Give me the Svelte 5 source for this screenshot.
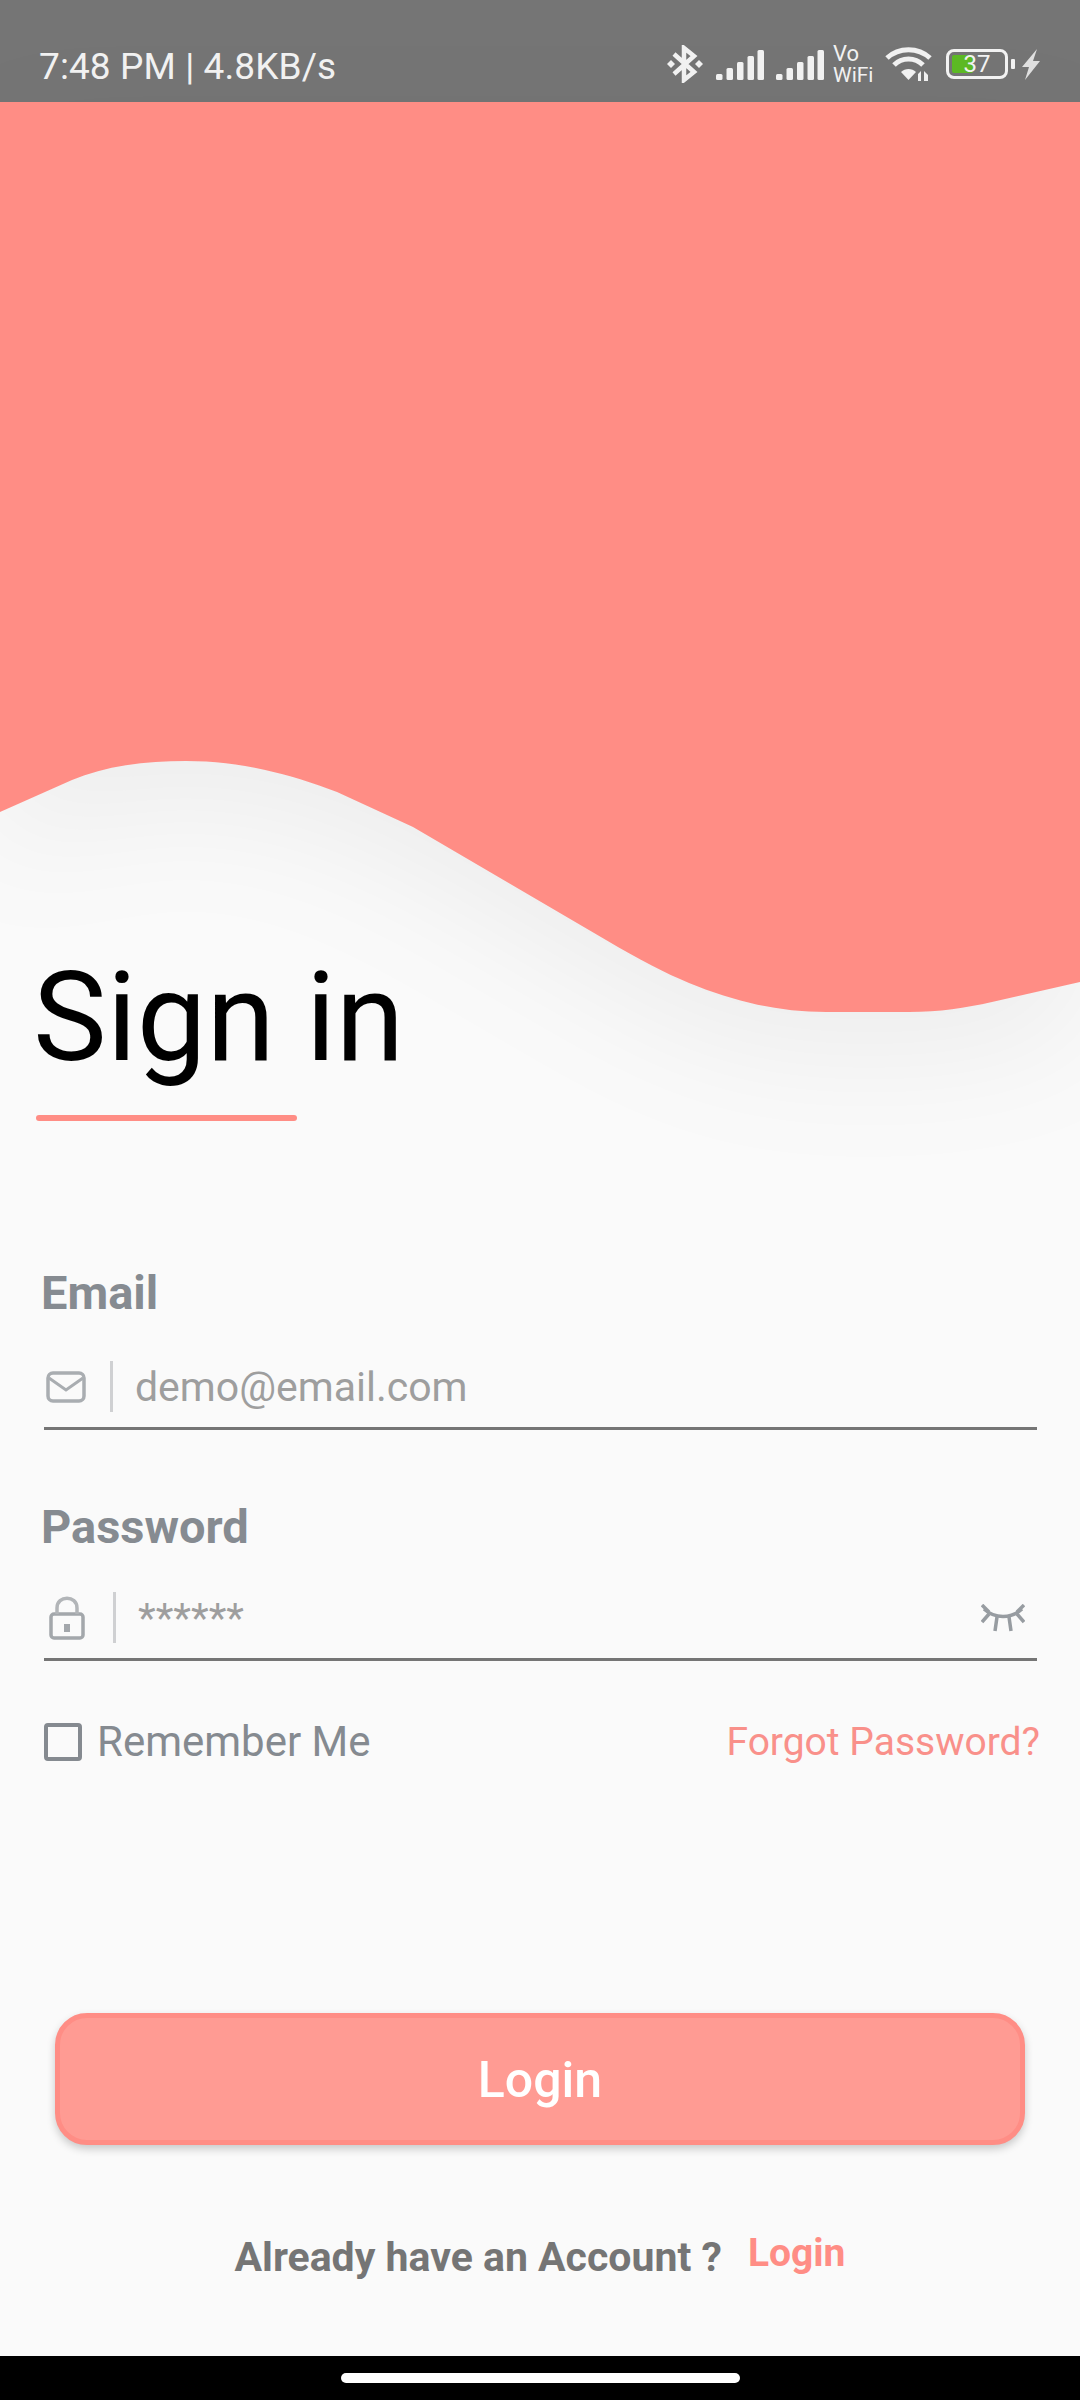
<script>
    const signals = [0, 1];
    const bars = [
        { x: 0, h: 6 },
        { x: 10.5, h: 12 },
        { x: 21, h: 18 },
        { x: 31.5, h: 24 },
        { x: 41.5, h: 30 }
    ];
</script>

<div class="screen">
    <header class="status">
        <span class="clock">7:48 PM | 4.8KB/s</span>
        <div class="status-icons">
            <svg class="bt" width="36" height="38" viewBox="0 0 36 38">
                <path d="M7 9 L27 27 L17 35 V3 L27 11 L7 29" fill="none" stroke="#f2f2f2" stroke-width="4.5"/>
                <path d="M4 15 L8 19 L4 23 L0 19 Z M32 15 L36 19 L32 23 L28 19 Z" fill="#f2f2f2"/>
            </svg>
            {#each signals as s}
                <svg class="signal" width="48" height="30" viewBox="0 0 48 30">
                    {#each bars as b}
                        <rect x={b.x} y={30 - b.h} width="6.5" height={b.h} rx="1.5" fill="#f2f2f2"/>
                    {/each}
                </svg>
            {/each}
            <div class="vowifi"><span>Vo</span><span>WiFi</span></div>
            <svg class="wifi" width="47" height="35" viewBox="0 0 47 35">
                <path d="M2 11 C14 0 33 0 45 11" fill="none" stroke="#f2f2f2" stroke-width="5"/>
                <path d="M9 18 C17 10 30 10 38 18" fill="none" stroke="#f2f2f2" stroke-width="5"/>
                <path d="M16 25 C20 21 27 21 31 25 L23.5 33 Z" fill="#f2f2f2"/>
                <path d="M33 34 V27 L36 24 V34 Z M39 34 V24 L43 28 V34 Z" fill="#f2f2f2"/>
            </svg>
            <div class="battery">
                <div class="level"></div>
                <span>37</span>
            </div>
            <div class="battery-tip"></div>
            <svg class="bolt" width="18" height="31" viewBox="0 0 18 31">
                <path d="M15 0 L0 18 L7 18 L3 31 L18 12 L11 12 Z" fill="#e0e0e0"/>
            </svg>
        </div>
    </header>

    <div class="hero">
        <svg width="1080" height="912" viewBox="0 0 1080 912">
            <path class="wave" d="M0 710 L72 678 C105 664 145 659 186 659 C240 659 290 672 337 690 L413 725 L606 838 C640 858 665 871 689 881 C735 900 780 910 826 910 L909 910 C940 910 965 906 992 900 L1080 880 V0 H0 Z"/>
        </svg>
    </div>

    <main class="content">
        <h1 class="title">Sign in</h1>
        <div class="title-line"></div>

        <form class="form" on:submit|preventDefault>
            <label class="label" for="email">Email</label>
            <div class="field email-field">
                <svg class="icon" width="40" height="32" viewBox="0 0 40 32">
                    <rect x="2" y="2" width="36" height="28" rx="5" fill="none" stroke="#a9adb1" stroke-width="3.5"/>
                    <path d="M3 7 L20 19 L37 7" fill="none" stroke="#a9adb1" stroke-width="3"/>
                </svg>
                <div class="divider"></div>
                <input id="email" class="input" placeholder="demo@email.com" />
            </div>

            <label class="label password-label" for="password">Password</label>
            <div class="field password-field">
                <svg class="icon lock" width="36" height="44" viewBox="0 0 36 44">
                    <rect x="2" y="18" width="32" height="24" rx="3" fill="none" stroke="#a3a7ab" stroke-width="3.5"/>
                    <path d="M8 18 V12 C8 -1 28 -1 28 12 V18" fill="none" stroke="#b2b5b8" stroke-width="3.5"/>
                    <rect x="15" y="28" width="6" height="8" fill="#a3a7ab"/>
                </svg>
                <div class="divider"></div>
                <input id="password" class="input stars" placeholder="******" />
                <svg class="eye" width="44" height="28" viewBox="0 0 44 28">
                    <path d="M3 5 C14 15 30 15 41 5" fill="none" stroke="#979ca1" stroke-width="3.5"/>
                    <path d="M1 1 L8 8 M1 18 L8 10 M43 1 L36 8 M43 18 L36 10 M16 13 L14 27 M28 13 L30 27" fill="none" stroke="#979ca1" stroke-width="3.5"/>
                </svg>
            </div>

            <div class="options">
                <label class="remember">
                    <span class="box"></span>
                    Remember Me
                </label>
                <span class="forgot">Forgot Password?</span>
            </div>

            <button class="login" type="submit">Login</button>
        </form>

        <div class="signup">
            <span class="already">Already have an Account ?</span>
            <span class="signup-link">Login</span>
        </div>
    </main>

    <footer class="navbar">
        <div class="pill"></div>
    </footer>
</div>

<style>
    :global(body) {
        margin: 0;
        background: #fafafa;
    }
    .screen {
        width: 1080px;
        height: 2400px;
        display: flex;
        flex-direction: column;
        overflow: hidden;
        background: #fafafa;
        font-family: Roboto, "Liberation Sans", sans-serif;
    }
    .status {
        height: 102px;
        flex: none;
        display: flex;
        justify-content: space-between;
        background: #757575;
        color: #f2f2f2;
        padding: 0 40px 0 39px;
        box-sizing: border-box;
    }
    .clock {
        font-size: 37px;
        line-height: 44px;
        margin-top: 45px;
        letter-spacing: 0.1px;
    }
    .status-icons {
        display: flex;
        align-items: flex-start;
        padding-top: 45px;
    }
    .bt { margin-right: 13px; }
    .signal { margin: 5px 12px 0 0; }
    .signal + .signal { margin-right: 9px; }
    .vowifi {
        width: 44px;
        display: flex;
        flex-direction: column;
        margin: -2px 8px 0 0;
        font-size: 21px;
        line-height: 20px;
    }
    .vowifi span:first-child {
        font-size: 22px;
        line-height: 22px;
    }
    .wifi { margin: 2px 14px 0 0; }
    .battery {
        position: relative;
        width: 62px;
        height: 30px;
        margin-top: 4px;
        box-sizing: border-box;
        border: 3px solid #f2f2f2;
        border-radius: 8px;
        display: flex;
        align-items: center;
        justify-content: center;
        font-size: 24px;
        line-height: 24px;
    }
    .level {
        position: absolute;
        left: 3px;
        top: 3px;
        bottom: 3px;
        width: 21px;
        background: #5cb924;
        border-radius: 2px;
    }
    .battery span {
        position: relative;
    }
    .battery-tip {
        width: 4px;
        height: 10px;
        margin: 14px 7px 0 3px;
        background: #f2f2f2;
        border-radius: 1px;
    }
    .bolt { margin-top: 4px; }
    .hero {
        height: 912px;
        flex: none;
    }
    .hero svg {
        display: block;
        overflow: visible;
    }
    .wave {
        fill: #ff8d85;
        filter: drop-shadow(0 45px 60px rgba(0, 0, 0, 0.05));
    }
    .content {
        flex: 1;
        position: relative;
        display: flex;
        flex-direction: column;
        margin-top: -69px;
    }
    .title {
        margin: 0 0 0 33px;
        font-size: 124px;
        line-height: 145px;
        font-weight: 400;
        color: #000;
    }
    .title-line {
        width: 261px;
        height: 6px;
        margin: 25px 0 0 36px;
        background: #ff8d85;
        border-radius: 3px;
    }
    .form {
        display: flex;
        flex-direction: column;
        padding: 145px 43px 0 44px;
    }
    .label {
        margin-left: -3px;
        font-size: 47px;
        line-height: 54px;
        font-weight: 700;
        color: #868b91;
    }
    .password-label {
        margin-top: 70px;
    }
    .field {
        height: 81px;
        display: flex;
        align-items: center;
        border-bottom: 3px solid #757575;
        margin-top: 26px;
    }
    .password-field {
        margin-top: 23px;
    }
    .icon {
        flex: none;
        margin-left: 2px;
    }
    .lock {
        margin-left: 5px;
    }
    .divider {
        flex: none;
        width: 3px;
        height: 51px;
        margin: 0 22px 0 24px;
        background: #cfd0d2;
    }
    .lock + .divider {
        margin: 0 22px 0 28px;
    }
    .input {
        flex: 1;
        min-width: 0;
        border: 0;
        padding: 0;
        background: none;
        outline: none;
        font-family: inherit;
        font-size: 41px;
        line-height: 50px;
        color: #757575;
    }
    .input::placeholder {
        color: #9e9e9e;
        opacity: 1;
    }
    .eye {
        flex: none;
        margin-right: 12px;
    }
    .options {
        display: flex;
        justify-content: space-between;
        align-items: center;
        margin: 56px -3px 0 0;
        font-size: 42px;
        line-height: 50px;
    }
    .remember {
        display: flex;
        align-items: center;
        gap: 15px;
        color: #858a90;
    }
    .box {
        width: 38px;
        height: 38px;
        box-sizing: border-box;
        border: 4px solid #858a90;
        border-radius: 4px;
    }
    .forgot {
        font-size: 39px;
        color: #f9908a;
    }
    .login {
        height: 132px;
        margin: 246px 12px 0 11px;
        padding: 2px 0 0;
        border: 5px solid #ff8d85;
        border-radius: 32px;
        background: #ff9b93;
        color: #fff;
        font-family: inherit;
        font-size: 50px;
        font-weight: 500;
        box-shadow: 0 4px 8px rgba(0, 0, 0, 0.2);
    }
    .signup {
        display: flex;
        justify-content: center;
        align-items: flex-start;
        gap: 26px;
        margin-top: 88px;
        font-weight: 700;
        font-size: 41px;
        line-height: 48px;
    }
    .already {
        color: #757575;
    }
    .signup-link {
        margin-top: -4px;
        font-size: 39px;
        color: #ff8d85;
    }
    .navbar {
        height: 44px;
        flex: none;
        box-sizing: border-box;
        display: flex;
        justify-content: center;
        padding-top: 17px;
        background: #000;
    }
    .pill {
        width: 399px;
        height: 10px;
        background: #fff;
        border-radius: 5px;
    }
</style>
